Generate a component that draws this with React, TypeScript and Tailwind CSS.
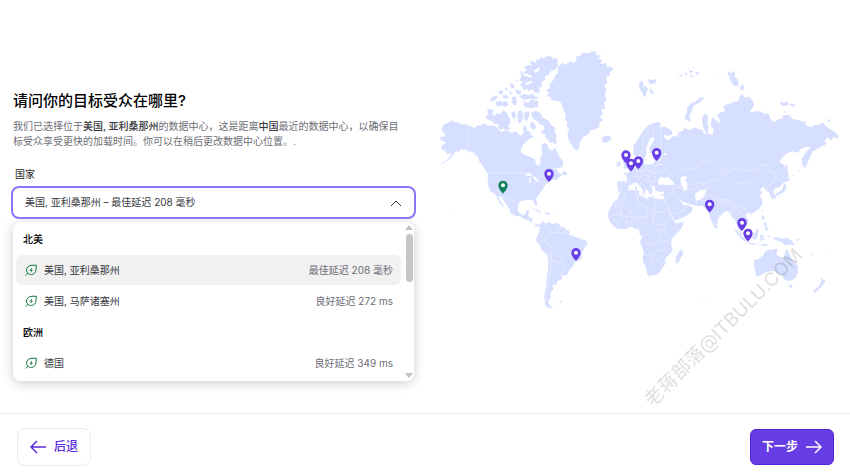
import React, { useState } from "react";

interface DataCenter {
  id: string;
  name: string;
  latency: string;
}

interface Region {
  title: string;
  centers: DataCenter[];
}

const regions: Region[] = [
  {
    title: "北美",
    centers: [
      { id: "arizona", name: "美国, 亚利桑那州", latency: "最佳延迟 208 毫秒" },
      { id: "massachusetts", name: "美国, 马萨诸塞州", latency: "良好延迟 272 ms" },
    ],
  },
  {
    title: "欧洲",
    centers: [{ id: "germany", name: "德国", latency: "良好延迟 349 ms" }],
  },
];

const land = [
  // North America
  "M28 292L47 288 42 278 33 270 40 256 50 250 66 241 74 247 84 247 96 253 113 254 134 264 141 257 152 256 163 250 172 257 186 256 200 261 208 272 216 276 224 271 233 273 246 279 254 274 262 277 268 286 275 285 282 275 278 264 284 256 290 262 293 275 298 272 304 285 312 291 300 296 288 305 276 318 272 335 285 345 301 352 314 358 320 374 326 378 332 370 330 354 338 342 334 330 335 314 343 308 352 314 356 326 366 332 376 322 380 334 386 341 388 352 396 358 401 370 396 380 381 385 366 386 380 388 386 398 394 404 400 392 410 398 412 405 398 404 388 412 378 420 365 420 356 428 348 432 342 442 333 456 325 466 318 476 322 492 319 498 314 492 309 481 297 479 286 481 273 483 265 492 263 508 268 520 278 525 287 522 289 512 299 510 294 524 297 531 308 534 306 548 312 555 322 552 330 557 318 560 304 548 296 541 280 536 272 529 258 529 241 519 238 506 226 490 216 473 204 468 208 478 218 492 224 503 212 494 204 480 198 466 182 454 175 440 173 420 174 402 168 394 162 385 156 374 148 366 146 352 136 342 128 334 118 334 108 329 97 328 88 332 84 338 78 330 72 342 60 356 40 370 30 373 50 360 62 346 64 340 50 342 46 332 34 328 33 318 48 308 34 300Z",
  // Arctic islands
  "M302 222L310 214 322 214 334 222 338 232 348 238 358 244 364 256 374 262 374 276 382 290 376 294 380 302 378 316 368 306 360 310 356 300 346 292 344 280 334 282 334 272 344 266 340 256 328 252 322 242 310 238Z",
  "M172 206L184 208 192 212 186 222 194 228 200 220 212 222 220 210 230 218 240 236 242 250 234 256 240 266 230 272 220 264 214 270 204 264 206 252 194 252 186 244 172 238 168 230 174 222Z",
  "M244 216L254 214 258 226 254 238 246 232ZM264 214L274 212 280 224 278 240 268 252 262 238ZM284 216L298 214 298 228 290 244 282 236ZM300 246L314 250 318 264 310 270 302 262Z",
  "M180 182L186 172 196 166 204 172 196 180 186 186ZM196 188L208 182 216 186 230 184 236 194 226 202 212 196 202 200ZM204 154L216 150 220 158 208 164ZM216 166L232 166 236 174 222 176ZM222 142L234 146 230 154ZM238 152L250 160 242 166ZM238 130L250 132 254 142 244 146ZM246 172L256 168 262 186 254 198 244 186ZM256 148L272 152 274 162 260 164ZM256 116L260 122 258 130Z",
  "M266 168L282 162 300 166 310 160 314 170 324 170 322 178 300 176 282 180ZM280 184L296 188 304 178 324 184 324 202 304 204 284 202Z",
  "M383 62L380 54 366 56 368 50 350 48 340 56 334 50 326 60 318 58 318 68 304 62 300 68 308 78 296 74 282 82 290 90 280 96 270 94 274 110 268 122 278 126 270 136 280 144 278 152 290 146 296 154 306 148 318 160 330 156 326 142 336 140 334 126 346 120 344 110 356 104 364 92 374 90 384 76Z",
  // Greenland, Iceland
  "M383 82L398 68 408 74 422 64 432 70 440 60 438 50 452 46 460 38 476 40 488 33 500 38 498 46 514 46 504 56 516 60 512 72 528 70 532 82 544 80 550 88 538 98 540 106 528 112 532 128 522 138 530 148 524 162 530 180 522 188 526 206 512 210 520 220 510 230 520 240 508 248 508 262 490 270 482 270 474 284 458 292 450 308 448 322 442 333 430 324 424 312 416 300 412 280 418 268 410 258 412 246 404 236 408 226 402 212 394 190 384 182 362 180 364 172 350 168 358 158 346 150 360 144 358 134 370 120 376 104 384 100Z",
  "M510 290L516 294 524 287 538 287 545 294 540 302 526 308 516 305 518 299Z",
  // Caribbean
  "M304 507L316 506 328 512 336 517 326 516 314 509ZM342 518L354 517 362 522 352 525ZM327 523L333 524 328 526ZM370 522L376 522 374 525Z",
  // South America
  "M328 556L338 544 346 550 358 546 366 552 378 549 388 552 392 560 402 562 408 570 418 570 418 584 434 590 452 596 468 602 473 610 462 626 456 640 456 652 448 662 434 666 428 680 418 690 412 704 402 708 392 702 398 714 394 720 382 722 380 734 368 734 368 744 374 742 364 756 358 764 364 770 356 780 356 790 360 798 370 803 356 804 344 794 346 780 342 772 348 744 350 716 354 690 355 660 350 642 336 632 330 616 318 602 322 586 328 576Z",
  "M386 784L398 784 392 789Z",
  // Africa, Madagascar
  "M568 458L580 456 594 450 614 450 628 452 626 464 640 470 650 478 658 470 670 474 690 478 704 477 704 484 710 496 716 510 722 522 728 538 738 550 762 546 756 562 742 580 730 590 724 600 724 614 728 630 720 642 706 654 706 672 698 682 690 696 678 704 656 708 651 700 648 684 638 662 638 650 642 640 636 622 630 606 636 590 628 580 628 568 618 568 606 560 582 568 562 566 548 556 538 542 534 526 536 510 544 500 550 486 564 476Z",
  "M754 627L760 640 752 654 744 670 737 668 738 650 744 638Z",
  // Eurasia
  "M564 454L562 440 562 426 576 424 590 426 590 408 580 398 594 398 600 390 612 386 624 378 634 372 634 360 644 358 642 372 660 374 672 370 674 358 666 352 684 344 672 338 660 338 658 322 668 308 674 294 664 292 655 305 650 320 648 325 650 340 642 360 634 362 630 344 618 350 610 342 610 318 630 288 640 272 654 256 670 250 682 246 694 250 688 260 704 260 724 270 728 282 714 288 702 284 706 298 718 300 728 288 740 290 746 276 758 274 762 264 780 270 792 262 808 268 818 270 820 282 828 282 818 256 816 234 824 222 834 226 832 250 836 262 832 280 848 284 850 268 842 256 846 230 860 242 870 250 868 238 860 226 870 218 886 214 880 198 900 190 926 182 928 170 936 162 944 172 960 172 970 186 972 196 958 218 976 214 992 214 998 220 1016 222 1022 238 1032 246 1042 240 1058 234 1060 226 1080 226 1086 236 1102 240 1126 246 1130 258 1146 262 1150 256 1168 254 1178 248 1198 266 1212 274 1227 288 1222 294 1208 292 1206 302 1192 292 1184 304 1190 312 1170 322 1148 334 1140 352 1126 384 1116 374 1116 354 1128 336 1142 322 1126 320 1110 328 1106 338 1084 334 1068 342 1056 354 1048 366 1062 374 1072 400 1062 426 1050 440 1034 446 1030 456 1036 470 1028 480 1020 466 1018 458 1008 450 1000 440 988 450 996 456 990 468 998 480 996 496 984 510 968 520 952 518 946 526 956 542 952 556 940 564 932 552 924 544 930 566 940 586 932 580 922 562 916 540 906 532 902 520 890 512 878 520 864 538 862 552 852 558 842 538 836 516 828 506 818 498 800 498 778 492 760 486 748 476 760 496 772 494 788 502 786 514 768 528 742 540 732 540 722 518 710 494 704 478 700 466 704 454 690 456 676 452 674 438 662 438 668 448 666 462 658 462 652 448 640 436 630 424 632 430 652 448 644 450 646 458 640 456 634 444 622 430 612 428 604 434 596 436 596 446 586 454 574 458Z",
  "M576 344L588 340 586 352 594 362 602 374 600 384 578 387 584 376 578 368 582 358ZM560 368L570 362 572 376 560 382ZM616 438L621 438 620 450 615 448ZM634 458L645 458 643 465ZM664 468L676 468 670 472ZM692 464L702 460 698 467Z",
  // Russian arctic
  "M627 128L636 122 642 132 638 142 648 138 654 150 648 158 648 172 640 168 636 156 628 146ZM654 116L664 120 680 118 676 130 658 132ZM662 144L672 160 664 162 658 150Z",
  "M763 234L772 214 770 204 784 190 800 182 808 174 820 170 820 178 806 190 792 196 786 210 778 228 782 246 770 240Z",
  "M742 104L758 104 756 110ZM764 98L774 100 768 108ZM776 90L790 94 782 100ZM784 104L792 110 780 114ZM794 96L810 98 800 106ZM788 82L792 80 792 86ZM846 98L851 98 849 102Z",
  "M892 96L898 94 902 102 910 94 916 98 914 110 924 120 926 138 914 138 904 128 900 116ZM930 140L938 132 944 146 932 152ZM1052 184L1062 188 1074 184 1076 194 1060 198 1050 192ZM1082 190L1096 194 1092 200 1080 196ZM1062 212L1072 216 1066 219ZM1190 240L1202 238 1198 246Z",
  // Japan, Sakhalin, Korea strait
  "M1034 464L1046 456 1058 448 1060 434 1066 428 1070 442 1064 454 1052 462 1040 468ZM1034 468L1040 472 1036 480ZM1060 422L1066 408 1082 418 1068 426ZM1066 370L1072 378 1076 412 1070 416 1066 394ZM1086 406L1092 402 1090 408ZM1104 392L1110 386 1108 394Z",
  // South-east Asia
  "M994 510L998 508 996 518ZM996 526L1004 528 1002 542 996 536ZM1000 548L1008 546 1012 556 1004 560ZM1008 560L1016 562 1012 572 1002 568ZM990 566L998 554 996 560ZM910 566L920 570 934 586 948 600 948 606 936 600 924 584ZM966 588L974 578 984 564 986 574 982 590 976 600 968 596ZM946 606L966 608 982 614 966 614ZM990 586L1006 584 998 590 1006 602 998 598 992 606ZM986 614L1004 612 1020 616 1004 618ZM1012 582L1018 590 1014 596Z",
  "M1026 594L1040 592 1054 596 1074 594 1086 604 1096 616 1080 614 1064 616 1056 606 1042 602ZM1096 598L1108 596 1102 604ZM852 560L860 554 864 562 858 566ZM958 520L966 522 960 526Z",
  // Australia, New Zealand
  "M972 660L986 656 1000 646 1006 634 1020 628 1028 630 1040 624 1042 632 1038 642 1052 652 1062 652 1066 634 1072 626 1078 642 1086 658 1098 668 1104 680 1104 696 1098 712 1088 720 1076 724 1062 718 1056 706 1042 700 1030 692 1008 696 994 706 978 708 976 696 972 678Z",
  "M1076 734L1088 734 1084 744 1078 742ZM1172 710L1178 718 1188 722 1176 738 1168 734 1174 726ZM1170 734L1174 742 1160 754 1152 760 1150 752 1160 744ZM1144 638L1152 646 1146 646ZM1186 642L1190 640 1188 646ZM820 770L826 772 822 776ZM66 516L72 518 70 520ZM54 510L60 512 58 514Z",
];

// Lakes and inland seas
const water = [
  "M686 434L684 420 694 410 704 414 714 410 728 424 734 434 714 436 702 434Z",
  "M750 414L762 408 772 412 764 420 772 430 772 450 762 452 756 438Z",
  "M795 462L812 450 830 448 824 464 816 476 798 484Z",
  "M284 406L294 398 306 403 304 408ZM298 414L302 410 302 428 298 428ZM308 408L318 412 324 420 318 422 312 416ZM312 428L328 420 330 424Z",
  "M270 96L292 102 306 108 304 114 286 108ZM312 92L326 82 330 90 316 98ZM284 130L304 122 306 128 290 136Z",
  "M700 340L708 338 708 345 702 346Z",
];

const borders = [
  "M113 254V334L126 336 146 356M178 398H286M330 412L344 402 360 400M210 468L224 474 238 472 250 482 264 496M276 528L286 522M296 540L306 536M314 548L322 552",
  "M338 546L344 560 356 566 362 580 350 590 346 604 330 602M326 584L340 590M362 580L382 576 384 560 394 562M382 576L400 580 418 574M350 604L362 624 376 622 388 636 398 648 396 662 382 668 366 660 362 640M356 642L364 660 362 690 356 720 350 760 352 790M366 660L380 664 394 672 404 682 396 696 398 708M406 562L402 578",
  "M580 458L586 470 566 484 552 488M566 484L590 504 606 512 634 494 622 478 626 464M622 478L618 452M634 494L652 500 674 516 706 516M674 478V516M550 498H570L576 524 546 526M576 524L590 530 606 512M570 540L590 530 612 532 626 546 622 562M550 540L566 546 574 566M590 540L592 564M606 540L602 562M612 532L650 530 652 502M650 530L646 548 628 562M674 516L668 548 650 556 634 572M668 548L688 558 706 552 718 524M706 552L700 572 716 586M634 588L660 582 672 566 694 572 690 598 674 612 646 608M690 598L710 604 722 610M674 612L680 634 704 628 710 644M642 644L668 644 680 634M668 644L664 684 650 688M664 668L684 660 700 646M730 540L744 568 736 584M716 586L726 594",
  "M706 474L714 462 730 462 744 476 748 484M730 462L728 444 744 440 756 446M728 522L750 518 768 506 770 496M772 450L790 448 800 458M798 484L800 498M816 478L826 466 838 462 846 474 862 482 880 486 890 480M832 498L824 486 816 480M886 504L884 490 896 488 902 500M900 520L910 508 914 494 926 500 940 504 952 516M914 494L906 484 892 478 868 480 850 468M918 528L930 518 944 528M930 518L926 502",
  "M748 396L760 386 790 388 804 380 800 372 824 362 846 368 868 380 880 398 894 396 914 386 944 392 982 388 990 374 1008 374 1018 392 1040 400 1036 420 1022 432 1010 442M880 398L866 408 864 420 840 424 826 430 812 432 796 426 778 420 774 412M894 396L886 410 904 422 926 430 962 426 980 412 992 402 982 390M812 432L826 442 848 444 864 430M784 430L800 440 812 448",
  "M636 344L640 320 636 300 650 276 664 262M668 262L674 292M690 258L694 290 690 330 680 338M590 424L604 430M604 390L620 398 618 412 630 420M624 380L622 394 640 396 636 408 620 412M646 374L650 390 638 396M650 390L668 398 672 378 690 372 688 356 700 350M668 398L654 408 640 406M668 398L686 402 698 394 720 398 728 410M690 372L704 378 712 390M654 408L656 424 642 422M656 424L674 426 686 424M674 426L676 408M660 438L664 428M574 426L572 452",
];

const pins = [
  { x: 357, y: 403 },
  { x: 588, y: 347 },
  { x: 603, y: 372 },
  { x: 625, y: 365 },
  { x: 680, y: 340 },
  { x: 219, y: 438, active: true },
  { x: 438, y: 640 },
  { x: 839, y: 495 },
  { x: 936, y: 550 },
  { x: 954, y: 582 },
];

function WorldMap() {
  return (
    <svg viewBox="30 30 1200 780" className="block w-full" aria-hidden="true">
      <path d={land.join("")} className="fill-[#d6dfff]" />
      <path d={water.join("")} className="fill-white" />
      <path d={borders.join("")} className="fill-none stroke-[#e6ebff] stroke-[3px]" />
      {pins.map((pin) => (
        <g
          key={`${pin.x}-${pin.y}`}
          transform={`translate(${pin.x} ${pin.y})`}
          className={pin.active ? "fill-[#12805c]" : "fill-[#673de6]"}
        >
          <path d="M0 23C-5 17-14 8-14-2a14 14 0 0 1 28 0C14 8 5 17 0 23Z" />
          <circle cy="-2" r="6" className="fill-white" />
        </g>
      ))}
    </svg>
  );
}

function LeafIcon() {
  return (
    <svg
      viewBox="0 0 24 24"
      className="size-3 shrink-0 fill-none stroke-[#14783c] stroke-2"
      strokeLinejoin="round"
      strokeLinecap="round"
      aria-hidden="true"
    >
      <path d="M2 22.500 6 18.500M22 2.500H14C7.500 2.500 3 7 3 12.500c0 2.500 1 4.500 3 6C8 20.500 10 21 12.500 21c5.500 0 9.500-4 9.500-10Z" />
      <path d="M14 7 9 13h3l-1 4.500 5-6h-3Z" className="fill-[#14783c] stroke-none" />
    </svg>
  );
}

function Arrow({ left }: { left?: boolean }) {
  return (
    <svg viewBox="0 0 16 14" className="h-[14px] w-4 fill-none stroke-current" strokeWidth="1.500" aria-hidden="true">
      <path d={left ? "M7 1 1 7l6 6M1 7h15" : "M9 1l6 6-6 6M15 7H0"} />
    </svg>
  );
}

export default function App() {
  const [selected, setSelected] = useState<string>("arizona");

  const centers = regions.flatMap((region) => region.centers);

  return (
    <div className="flex min-h-screen flex-col bg-white font-[Inter,'Noto_Sans_CJK_SC',sans-serif] text-[10px] text-[#36373d]">
      <main className="grid flex-1 grid-cols-[405fr_400fr] items-start gap-6 pr-[10px] pl-[11px]">
        {/* Audience form */}
        <section className="pt-[89px] pb-8">
          <div className="px-[2px]">
            <h1 className="text-[15px] leading-6 font-medium text-black">请问你的目标受众在哪里?</h1>
            <p className="mt-[6px] leading-[15px] text-[#6d6e75]">
              我们已选择位于<strong className="font-medium text-[#36373d]">美国, 亚利桑那州</strong>
              的数据中心，这是距离
              <strong className="font-medium text-[#36373d]">中国</strong>最近的数据中心，以确保目
              <br />
              标受众享受更快的加载时间。你可以在稍后更改数据中心位置。.
            </p>
          </div>

          <label htmlFor="country" className="mt-[17px] block px-1 leading-4 text-[#1d1e20]">
            国家
          </label>
          <div className="relative mt-1">
            <select
              id="country"
              value={selected}
              onChange={(e) => setSelected(e.target.value)}
              className="h-[33px] w-full appearance-none rounded-lg border-2 border-[#8c75f7] bg-white px-3 text-[#36373d] outline-none"
            >
              {centers.map((center) => (
                <option key={center.id} value={center.id}>
                  {`${center.name} – ${center.latency}`}
                </option>
              ))}
            </select>
            <svg
              viewBox="0 0 12 8"
              className="pointer-events-none absolute top-[13px] right-[14px] h-2 w-3 fill-none stroke-[#36373d]"
              aria-hidden="true"
            >
              <path d="M1 7l5-5 5 5" />
            </svg>
          </div>

          {/* Open list */}
          <div className="mx-[2px] mt-[3px] flex h-[159px] rounded-lg bg-white shadow-[0_2px_12px_rgba(0,0,0,0.2)]">
            <ul className="flex flex-1 flex-col gap-px px-[3px] pt-[2px]">
              {regions.map((region) => (
                <React.Fragment key={region.title}>
                  <li className="flex h-[30px] items-center px-[7px] font-medium text-black">{region.title}</li>
                  {region.centers.map((center) => (
                    <li key={center.id}>
                      <button
                        type="button"
                        onClick={() => setSelected(center.id)}
                        className={`flex h-[30px] w-full items-center gap-[7px] rounded-md pr-2 pl-[9px] ${
                          selected === center.id ? "bg-[#f1f1f1]" : ""
                        }`}
                      >
                        <LeafIcon />
                        <span>{center.name}</span>
                        <span className="ml-auto text-[#6b6c75]">{center.latency}</span>
                      </button>
                    </li>
                  ))}
                </React.Fragment>
              ))}
            </ul>
            <div className="flex w-[10px] flex-col items-center py-[3px]">
              <svg viewBox="0 0 8 5" className="h-[5px] w-2 fill-[#c1c1c1]" aria-hidden="true">
                <path d="M4 0l4 5H0z" />
              </svg>
              <div className="mt-1 h-12 w-[7px] rounded-full bg-[#c6c6c6]" />
              <svg viewBox="0 0 8 5" className="mt-auto h-[5px] w-2 fill-[#c1c1c1]" aria-hidden="true">
                <path d="M4 5L0 0h8z" />
              </svg>
            </div>
          </div>
        </section>

        {/* Map */}
        <section className="relative pt-[50px]">
          <WorldMap />
          <div className="pointer-events-none absolute top-[328px] left-[71%] -translate-x-1/2 -translate-y-1/2 -rotate-45 text-[19px] font-medium whitespace-nowrap text-black/12">
            老蒋部落@ITBULU.COM
          </div>
        </section>
      </main>

      <footer className="flex items-center justify-between border-t border-[#ebebee] py-[7px] pr-4 pl-[17px] text-xs">
        <button
          type="button"
          className="my-[7px] flex h-[38px] items-center gap-2 rounded-lg border border-[#ebebee] px-3 font-medium text-[#5b2be0]"
        >
          <Arrow left />
          后退
        </button>
        <button
          type="button"
          className="flex h-9 items-center gap-2 rounded-md border border-[#5025d1] bg-[#673de6] px-[11px] font-bold text-white"
        >
          下一步
          <Arrow />
        </button>
      </footer>
    </div>
  );
}
